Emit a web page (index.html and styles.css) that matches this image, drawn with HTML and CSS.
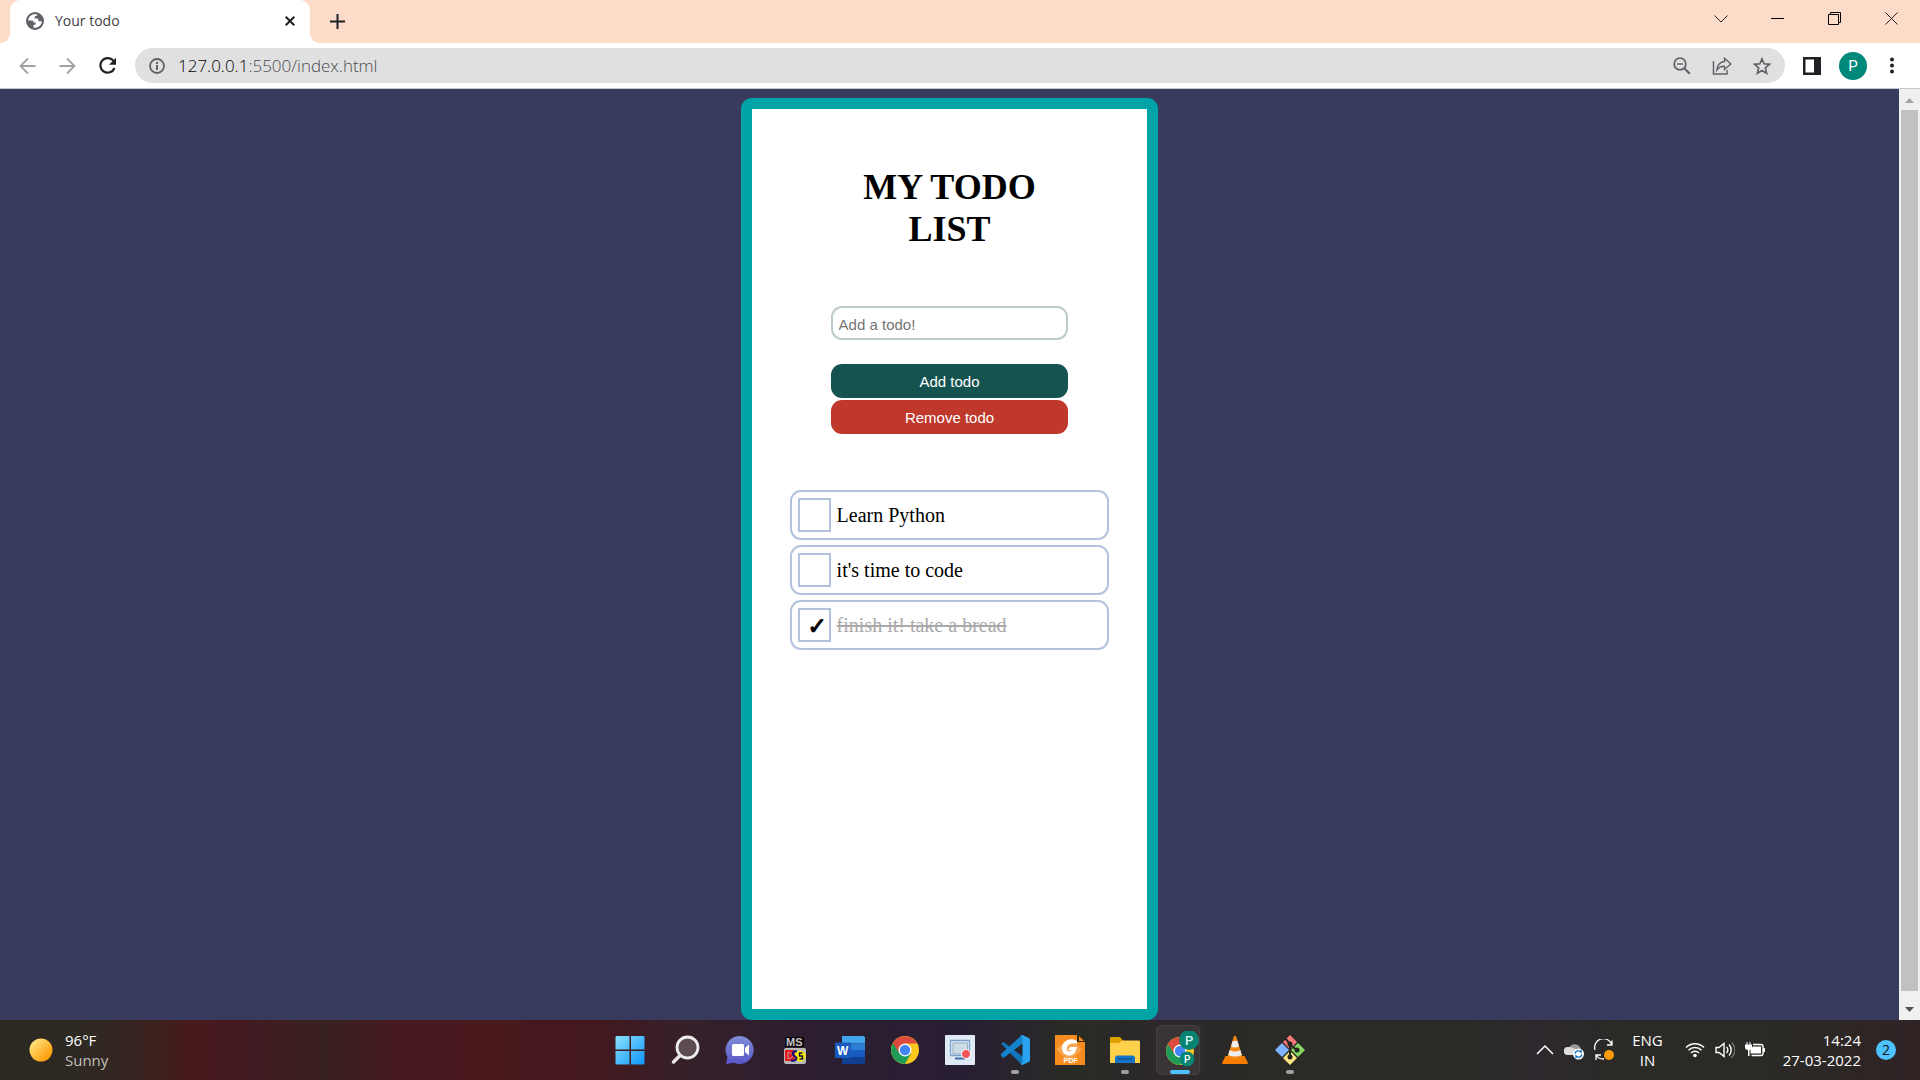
FILE: index.html
```html
<!DOCTYPE html>
<html lang="en">
<head>
<meta charset="utf-8">
<title>Your todo</title>
<link rel="stylesheet" href="styles.css">
</head>
<body>
<header class="tabstrip">
  <div class="tab">
    <svg class="tab-icon" width="18" height="18" viewBox="0 0 18 18"><circle cx="9" cy="9" r="9" fill="#5f6368"/><path d="M8 2.200C5 2.600 2.400 5.300 2.200 8.400h3.800c1.200 0 1.600.8 1.600 2h2v2.400H7.500v2.700c4.500 1 8.300-2.300 8.300-6.300h-2.300c-.8 0-1.300-.6-1.300-1.500V6.600H8.700V5.200c0-.8.8-1.100 1.600-1.100h.8V2.600C10 2.200 9 2.100 8 2.200z" fill="#fff"/></svg>
    <span class="tab-title">Your todo</span>
    <button class="plain" aria-label="Close tab"><svg width="10" height="10" viewBox="0 0 10 10"><path d="M.7.7l8.600 8.600M9.300.7L.7 9.300" stroke="#202124" stroke-width="2"/></svg></button>
  </div>
  <button class="plain new-tab" aria-label="New tab"><svg width="15" height="15" viewBox="0 0 15 15"><path d="M7.500 0v15M0 7.500h15" stroke="#202124" stroke-width="2"/></svg></button>
  <div class="window-controls">
    <button class="plain" aria-label="Search tabs"><svg width="14" height="14" viewBox="0 0 14 14"><path d="M.5 3.500l6.500 6.500 6.500-6.500" fill="none" stroke="#222"/></svg></button>
    <button class="plain" aria-label="Minimize"><svg width="14" height="14" viewBox="0 0 14 14"><path d="M0 6.500h13" stroke="#000"/></svg></button>
    <button class="plain" aria-label="Restore"><svg width="14" height="14" viewBox="0 0 14 14"><path d="M.5 2.500h10v10H.5zM2.500 2.500v-2h10v10h-2" fill="none" stroke="#000"/></svg></button>
    <button class="plain" aria-label="Close"><svg width="14" height="14" viewBox="0 0 14 14"><path d="M.5.5l12 12M12.500.5l-12 12" stroke="#222"/></svg></button>
  </div>
</header>
<nav class="toolbar">
  <div class="nav-buttons">
    <button class="plain" aria-label="Back"><svg width="18" height="18" viewBox="0 0 18 18"><path d="M16.500 9H2M9 1.500L1.500 9 9 16.500" fill="none" stroke="#a0a2a5" stroke-width="1.800"/></svg></button>
    <button class="plain" aria-label="Forward"><svg width="18" height="18" viewBox="0 0 18 18"><path d="M.5 9H15M8 1.500L15.500 9 8 16.500" fill="none" stroke="#a0a2a5" stroke-width="1.800"/></svg></button>
    <button class="plain" aria-label="Reload"><svg width="18" height="18" viewBox="0 0 18 18"><path d="M14.700 4.200A7.300 7.300 0 1 0 15.500 11" fill="none" stroke="#202124" stroke-width="2.200"/><path d="M17 .8v7h-7z" fill="#202124"/></svg></button>
  </div>
  <div class="address">
    <svg width="16" height="16" viewBox="0 0 16 16"><circle cx="8" cy="8" r="7" fill="none" stroke="#5f6368" stroke-width="1.800"/><path d="M8 7v5M8 4v2" stroke="#5f6368" stroke-width="2"/></svg>
    <span class="url"><span class="host">127.0.0.1</span>:5500/index.html</span>
    <button class="plain" aria-label="Zoom"><svg width="18" height="18" viewBox="0 0 18 18"><circle cx="7" cy="7" r="5.800" fill="none" stroke="#5f6368" stroke-width="1.800"/><path d="M4 7h6" stroke="#5f6368" stroke-width="1.500"/><path d="M11.200 11.200l5.500 5.500" stroke="#5f6368" stroke-width="2.200"/></svg></button>
    <button class="plain" aria-label="Share"><svg width="20" height="18" viewBox="0 0 20 18"><path d="M1.500 4v13h13.500v-4" fill="none" stroke="#5f6368" stroke-width="1.500"/><path d="M12.500 1.200l6.300 5.800-6.300 5.500V9.300C9 9.200 6.800 10.300 4.800 13c.5-4.500 3-8 7.700-8.500z" fill="none" stroke="#5f6368" stroke-width="1.400"/></svg></button>
    <button class="plain" aria-label="Bookmark"><svg width="18" height="18" viewBox="0 0 18 18"><path d="M9 1.800l2.100 5 5.400.5-4.100 3.600 1.200 5.300L9 13.400l-4.600 2.800 1.200-5.300L1.500 7.300l5.400-.5z" fill="none" stroke="#5f6368" stroke-width="1.700"/></svg></button>
  </div>
  <div class="toolbar-end">
    <button class="plain" aria-label="Side panel"><svg width="18" height="18" viewBox="0 0 18 18"><path fill="#202124" fill-rule="evenodd" d="M0 0h18v18H0zM2.500 2.500v13H11v-13z"/></svg></button>
    <button class="plain avatar" aria-label="Profile">P</button>
    <button class="plain" aria-label="Menu"><svg width="6" height="18" viewBox="0 0 6 18"><g fill="#202124"><circle cx="3" cy="2.500" r="2"/><circle cx="3" cy="8.500" r="2"/><circle cx="3" cy="14.500" r="2"/></g></svg></button>
  </div>
</nav>
<div class="viewport">
  <main class="page">
    <section class="card">
      <h1 class="title">MY TODO LIST</h1>
      <form class="form">
        <input class="field" type="text" placeholder="Add a todo!" aria-label="Add a todo">
        <button class="button add" type="button">Add todo</button>
        <button class="button remove" type="button">Remove todo</button>
      </form>
      <ul class="list">
        <li class="item"><input class="check" type="checkbox" id="todo1"><label for="todo1">Learn Python</label></li>
        <li class="item"><input class="check" type="checkbox" id="todo2"><label for="todo2">it's time to code</label></li>
        <li class="item"><input class="check" type="checkbox" id="todo3" checked><label for="todo3">finish it! take a bread</label></li>
      </ul>
    </section>
  </main>
  <div class="scrollbar">
    <svg width="9" height="5" viewBox="0 0 9 5"><path d="M4.500 0L9 5H0z" fill="#a3a3a3"/></svg>
    <div class="thumb"></div>
    <svg width="9" height="5" viewBox="0 0 9 5"><path d="M4.500 5L9 0H0z" fill="#505050"/></svg>
  </div>
</div>
<footer class="taskbar">
  <div class="weather">
    <svg width="24" height="24" viewBox="0 0 24 24"><defs><linearGradient id="sun" x1="0" y1="0" x2="1" y2="1"><stop offset=".1" stop-color="#ffe680"/><stop offset=".9" stop-color="#ff9500"/></linearGradient></defs><circle cx="12" cy="12" r="11.500" fill="url(#sun)"/></svg>
    <div class="weather-text"><span>96°F</span><span class="muted">Sunny</span></div>
  </div>
  <div class="apps">
    <button class="plain app" aria-label="Start"><svg width="30" height="30" viewBox="0 0 30 30"><defs><linearGradient id="win" x1="0" y1="0" x2="1" y2="1"><stop offset="0" stop-color="#8de1ff"/><stop offset="1" stop-color="#0c96f8"/></linearGradient></defs><path d="M1.500 1h13v13.500h-14V2zM16 1h12.500l1 1v12.500H16zM.5 16h14v13.500h-13l-1-1zM16 16h13.500v12.500l-1 1H16z" fill="url(#win)"/></svg></button>
    <button class="plain app" aria-label="Search"><svg width="30" height="30" viewBox="0 0 30 30"><circle cx="17.500" cy="12.500" r="10.500" fill="#fff" fill-opacity=".2" stroke="#eee" stroke-width="2.800"/><path d="M10 20.500L3.500 27" stroke="#e6e6e6" stroke-width="3.500" stroke-linecap="round"/></svg></button>
    <button class="plain app" aria-label="Chat"><svg width="30" height="30" viewBox="0 0 30 30"><defs><linearGradient id="chat" x1="0" y1="0" x2="0" y2="1"><stop offset="0" stop-color="#7f8fd6"/><stop offset="1" stop-color="#5b57c9"/></linearGradient></defs><path d="M15 1a14 14 0 1 1-6 26.800L1 29l1.500-7A14 14 0 0 1 15 1z" fill="url(#chat)"/><rect x="7" y="9" width="12" height="12" rx="1.500" fill="#fff"/><path d="M20 13l4-3.500v11L20 17z" fill="#fff"/></svg></button>
    <button class="plain app" aria-label="MS-DOS"><svg width="24" height="28" viewBox="0 0 24 28"><rect x="2" y="1" width="19" height="10" fill="#080808"/><text x="3" y="10" font-family="Liberation Sans" font-weight="700" font-size="11" fill="#c4c4c4">MS</text><rect x="1" y="12" width="22" height="16" rx="2" fill="#b9b9b9"/><path d="M2 14h10v11H2z" fill="#e8161c"/><path d="M5 16.500h1.500a3 3 0 0 1 0 6H5z" fill="none" stroke="#b9a0a0"/><circle cx="17" cy="20" r="5.500" fill="#fff200"/><path d="M14 15.500c-3-1-5 1-4 3s4 2 3.500 4-3 2.500-5.500 2" fill="none" stroke="#101080" stroke-width="2"/><path d="M19.500 17h-3v3h3v3h-3" fill="none" stroke="#101040" stroke-width="1.500"/></svg></button>
    <button class="plain app" aria-label="Word"><svg width="30" height="28" viewBox="0 0 30 28"><path d="M7 0h21l2 1v6.500H7z" fill="#41a5ee"/><path d="M7 7.500h23V14H7z" fill="#2b7cd3"/><path d="M7 14h23v7H7z" fill="#185abd"/><path d="M7 21h23v6l-1 1H7z" fill="#103f91"/><rect x="0" y="6.500" width="16" height="15.500" rx="1" fill="#185abd"/><text x="2" y="18.500" font-family="Liberation Sans" font-weight="700" font-size="12" fill="#fff">W</text></svg></button>
    <button class="plain app" aria-label="Chrome"><svg width="28" height="28" viewBox="0 0 28 28"><defs><g id="chrome"><circle cx="14" cy="14" r="14" fill="#fbc71e"/><path d="M14 14L1.900 7A14 14 0 0 0 14 28l6-10.500z" fill="#1f9d57"/><path d="M14 7.500H26.200A14 14 0 0 0 1.900 7l6.300 10z" fill="#dc4b3e"/><circle cx="14" cy="14" r="6.500" fill="#fff"/><circle cx="14" cy="14" r="5.200" fill="#4285f4"/></g></defs><use href="#chrome"/></svg></button>
    <button class="plain app" aria-label="Screen recorder"><svg width="30" height="30" viewBox="0 0 30 30"><rect width="30" height="30" rx="1" fill="#dfeaf5"/><path d="M5.500 5.500h19v15h-19z" fill="none" stroke="#7ba2c9" stroke-width="1.300"/><path d="M8 8h14.500v11H8z" fill="#ccdce6" stroke="#90adc2"/><path d="M10 23.500h10" stroke="#3d6fa8" stroke-width="2"/><circle cx="21" cy="19" r="4.500" fill="#ee5656" stroke="#fff"/></svg></button>
    <button class="plain app running" aria-label="Visual Studio Code"><svg width="30" height="30" viewBox="0 0 30 30"><path d="M1 8.500l2.500-1.500L24 22.500V29l-2 1z" fill="#1177bd"/><path d="M1 21l2.500 2L24 7.500V1l-2-1L1 19z" fill="#1583cc"/><path d="M22 0l7 3 1 1.500v21L29 27l-7 3-1.500-1 2-1.500v-25L20.500 1z" fill="#2aa4f0"/></svg></button>
    <button class="plain app" aria-label="PDF reader"><svg width="30" height="30" viewBox="0 0 30 30"><path d="M0 0h22v7h8v23H0z" fill="#f68c20"/><path d="M23.500 0L30 6.500h-6.500z" fill="#f68c20" stroke="#3a240c"/><path d="M14 4l13 10-13 13L1 14z" fill="#f9a652"/><path d="M22 6C15 1 6 7 7 14c1 8 12 9 14 1l1-3h-7l-2 3h3c-2 3-5 1-4-3 1-3 6-5 10-3z" fill="#fff"/><text x="8.500" y="28" font-family="Liberation Sans" font-weight="700" font-size="7" fill="#fff">PDF</text></svg></button>
    <button class="plain app running" aria-label="File Explorer"><svg width="30" height="28" viewBox="0 0 30 28"><path d="M0 2q0-1 1-1h9l3 3.500L10 8H0z" fill="#dda100"/><path d="M0 7h9l3.500-2.500H29l1 1V27H0z" fill="#ffd04a"/><path d="M5 27v-5q0-2.500 2.500-2.500h15q2.500 0 2.500 2.500v5z" fill="#1574c8"/><path d="M8 23h14" stroke="#0c4f93" stroke-width="1.300"/></svg></button>
    <button class="plain app running active" aria-label="Chrome, profile P"><svg width="38" height="38" viewBox="0 0 38 38"><use href="#chrome" x="5" y="6"/><circle cx="28" cy="9" r="10" fill="#078372"/><text x="24" y="14" font-family="Roboto" font-weight="500" font-size="13" fill="#d5f5ef">P</text><circle cx="26" cy="28" r="7.500" fill="#078372"/><text x="23" y="31.500" font-family="Roboto" font-weight="500" font-size="10" fill="#fff">P</text></svg></button>
    <button class="plain app" aria-label="VLC"><svg width="26" height="30" viewBox="0 0 26 30"><path d="M3.500 21h19L26 28q0 1-1 1H1q-1 0-1-1z" fill="#f57c00"/><path d="M12 1h2l6.500 21q-7.500 4-15 0z" fill="#f58a16"/><path d="M10.700 6h4.600l1.700 5.500q-4 2-8 0zM7.700 15q5.300 3 10.600 0l1.500 5q-6.800 3-13.600 0z" fill="#eee"/></svg></button>
    <button class="plain app running" aria-label="Git Bash"><svg width="30" height="30" viewBox="0 0 30 30"><path d="M15 0l7 7-7 7.500L8 7z" fill="#f87878"/><path d="M7 8l7 7-7 7-7-7z" fill="#80b3ff"/><path d="M23 8l7 7-7 7-7-7z" fill="#87d660"/><path d="M15 16l7 7-7 7-7-7z" fill="#ffe680"/><path d="M10 3l5 6v13M15 10l7 5" fill="none" stroke="#252522" stroke-width="2"/><g fill="#252522"><circle cx="15" cy="9" r="2.500"/><circle cx="22" cy="15" r="2.500"/><circle cx="15" cy="22" r="2.500"/></g></svg></button>
  </div>
  <div class="tray">
    <button class="plain" aria-label="Show hidden icons"><svg width="18" height="20" viewBox="0 0 18 20"><path d="M1 14l8-8 8 8" fill="none" stroke="#fff" stroke-width="1.500"/></svg></button>
    <svg width="20" height="20" viewBox="0 0 20 20"><path d="M6 6a6 5 0 0 1 10 1l2 4-7 4H5z" fill="#999"/><path d="M4 15a4 4 0 0 1-.5-8C7 6.500 8 8 12 9v6z" fill="#ddd"/><circle cx="14.500" cy="14" r="5.500" fill="#fff"/><path d="M11 13.500a3.500 3.500 0 0 1 6-1.500v-2M18 14.500a3.500 3.500 0 0 1-6 1.500v2" fill="none" stroke="#0f6cbd" stroke-width="1.300"/></svg>
    <svg width="20" height="22" viewBox="0 0 20 22"><path d="M1 11A8.500 8.500 0 0 1 18 6M18 1.500V6h-5M10 20A9 9 0 0 1 2 16M2 21v-5h5" fill="none" stroke="#fff" stroke-width="1.300"/><circle cx="15" cy="16" r="5" fill="#ff9b0a"/></svg>
    <div class="language"><span>ENG</span><span>IN</span></div>
    <svg width="20" height="20" viewBox="0 0 20 20"><g fill="none" stroke="#fff" stroke-width="1.500"><path d="M1 7.500a12.700 12.700 0 0 1 18 0M3.500 10.300a9.200 9.200 0 0 1 13 0M6 13a5.700 5.700 0 0 1 8 0"/></g><circle cx="10" cy="15.500" r="1.800" fill="#fff"/></svg>
    <svg width="20" height="20" viewBox="0 0 20 20"><path d="M1 7.500h3L9 3.500v13L4 12.500H1z" fill="none" stroke="#fff" stroke-width="1.400"/><path d="M11.500 7a4 4 0 0 1 0 6M14 4.500a8 8 0 0 1 0 11" fill="none" stroke="#fff" stroke-width="1.400"/><path d="M16.500 2.500a10 10 0 0 1 0 15" fill="none" stroke="#777" stroke-width="1.400"/></svg>
    <svg width="20" height="20" viewBox="0 0 20 20"><path d="M8 4.500h8q2 0 2 2v7q0 2-2 2H6.500" fill="none" stroke="#fff" stroke-width="1.400"/><path d="M8 6.500h8v7H5.500V9zM18 8h2v4h-2zM0 4.500h7v3q0 2-2.500 2.500v6H3v-6q-3-.5-3-2.500zM1.500 2h1v3h-1zM4.500 2h1v3h-1z" fill="#fff"/></svg>
    <div class="clock"><span>14:24</span><span>27-03-2022</span></div>
    <span class="count">2</span>
  </div>
</footer>
</body>
</html>
```
FILE: styles.css
```css
* { box-sizing: border-box; }

body {
  margin: 0;
  height: 100vh;
  display: flex;
  flex-direction: column;
  overflow: hidden;
  font-family: "Open Sans", "Noto Sans", sans-serif;
}

svg { display: block; flex: none; }

.plain {
  display: flex;
  align-items: center;
  justify-content: center;
  flex: none;
  padding: 0;
  border: 0;
  background: none;
}

/* Browser frame */
.tabstrip {
  flex: none;
  display: flex;
  height: 43px;
  padding: 0 21px 0 10px;
  background: #fcdbc9;
}

.tab {
  position: relative;
  display: flex;
  align-items: center;
  width: 300px;
  padding: 0 15px 2px 16px;
  gap: 11px;
  border-radius: 10px 10px 0 0;
  background: #fff;
  font-size: 14px;
  color: #3c4043;
}

.tab::before,
.tab::after {
  content: "";
  position: absolute;
  bottom: 0;
  width: 10px;
  height: 10px;
}

.tab::before {
  left: -10px;
  background: radial-gradient(circle at 0 0, #fcdbc9 10px, #fff 10px);
}

.tab::after {
  right: -10px;
  background: radial-gradient(circle at 100% 0, #fcdbc9 10px, #fff 10px);
}

.tab-title { flex: 1; }

.new-tab { margin-left: 20px; }

.window-controls {
  display: flex;
  gap: 43px;
  height: 37px;
  margin-left: auto;
}

.toolbar {
  flex: none;
  display: flex;
  align-items: center;
  height: 46px;
  padding: 0 25px 0 19px;
  border-bottom: 1px solid #c6c6c8;
  background: #fff;
}

.nav-buttons { display: flex; gap: 22px; }

.address {
  flex: 1;
  display: flex;
  align-items: center;
  height: 35px;
  margin: 0 18px;
  padding: 0 14px;
  gap: 21px;
  border-radius: 18px;
  background: #e0e0e0;
}

.url {
  flex: 1;
  margin-left: -8px;
  font-size: 17px;
  font-weight: 300;
  color: #4b4d50;
}

.host { color: #000; }

.toolbar-end {
  display: flex;
  align-items: center;
  gap: 18px;
}

.toolbar-end .plain:last-child { margin-left: 4px; }

.avatar {
  width: 28px;
  height: 28px;
  border-radius: 50%;
  background: #00897b;
  color: #fff;
  font: 15px Roboto, sans-serif;
}

/* Page */
.viewport {
  flex: 1;
  display: flex;
  min-height: 0;
}

.page {
  flex: 1;
  display: flex;
  justify-content: center;
  padding-top: 9px;
  background: #383b5d;
}

.card {
  width: 22%;
  padding: 57px 38px 0;
  border: 11px solid #00a4a6;
  border-radius: 11px;
  background: #fff;
}

.title {
  margin: 0 56px 56px;
  font: bold 36px/42px "Liberation Serif", serif;
  text-align: center;
}

.form {
  display: flex;
  flex-direction: column;
  gap: 2px;
  margin: 0 41px 56px;
}

.field,
.button {
  width: 100%;
  height: 34px;
  border: 0;
  border-radius: 11px;
  font: 15px "Liberation Sans", sans-serif;
}

.field {
  margin-bottom: 22px;
  padding: 2px 6px 0;
  border: 2px solid #bccccb;
}

.field::placeholder { color: #757575; }

.button { padding: 0; color: #fff; }
.add { background: #155350; }
.remove { background: #c0372b; }

.list {
  display: flex;
  flex-direction: column;
  gap: 5px;
  margin: 0;
  padding: 0;
  list-style: none;
}

.item {
  display: flex;
  align-items: center;
  height: 50px;
  padding: 0 6px;
  gap: 6px;
  border: 2px solid #b3c3de;
  border-radius: 11px;
  font: 20px "Liberation Serif", serif;
}

.check {
  appearance: none;
  display: grid;
  place-items: center;
  width: 33px;
  height: 34px;
  margin: 0;
  border: 2px solid #b3c3de;
}

.check:checked::before {
  content: "✓";
  padding: 2px 0 0 6px;
  font: bold 23px "DejaVu Sans", sans-serif;
  -webkit-text-stroke: 1px #000;
}

.check:checked + label {
  color: #aaa;
  text-decoration: line-through;
}

.scrollbar {
  display: flex;
  flex-direction: column;
  align-items: center;
  width: 21px;
  padding: 9px 2px 8px;
  background: #f0f0f0;
}

.thumb {
  flex: 1;
  align-self: stretch;
  margin: 7px 0 16px;
  background: #c1c1c1;
}

/* Taskbar */
.taskbar {
  flex: none;
  display: grid;
  grid-template-columns: 1fr auto 1fr;
  align-items: center;
  height: 60px;
  padding: 0 24px;
  background: linear-gradient(90deg, #2b2922 0, #2f2823 5%, #3b211e 8%, #47191c 10%, #421a21 13%, #38211f 17%, #47181f 21%, #48181c 26%, #43191f 31%, #35202a 36%, #2b1e30 43%, #281e33 50%, #29272a 54%, #2a2b25 56%, #2c272b 61%, #2a2a26 65%, #2a2b26 76%, #2d282d 80%, #2a2b26 85%, #2a2a26 92%, #302325 100%);
  color: #fff;
  font-size: 15px;
  line-height: 20px;
}

.weather {
  display: flex;
  align-items: center;
  gap: 12px;
  padding-left: 5px;
}

.weather-text,
.language,
.clock {
  display: flex;
  flex-direction: column;
}

.muted { color: #c4bfba; }

.apps { display: flex; }

.app {
  position: relative;
  width: 55px;
  height: 50px;
}

.app svg { position: relative; }

.running::after {
  content: "";
  position: absolute;
  bottom: 1px;
  width: 8px;
  height: 4px;
  border-radius: 2px;
  background: #a0a0a0;
}

.active::before {
  content: "";
  position: absolute;
  inset: 0 8px 0 3px;
  border: 1px solid #454142;
  border-radius: 5px;
  background: #393436;
  box-shadow: 5px 0 0 #2e2d2c;
}

.active::after { width: 20px; background: #4cc2ff; }

.tray {
  display: flex;
  align-items: center;
  justify-content: flex-end;
  gap: 10px;
}

.language {
  margin: 0 12px 0 8px;
  text-align: center;
}

.clock {
  margin: 0 5px 0 8px;
  text-align: right;
}

.count {
  width: 20px;
  height: 20px;
  border-radius: 50%;
  background: #4cc2ff;
  color: #111;
  font-size: 14px;
  text-align: center;
}
```
